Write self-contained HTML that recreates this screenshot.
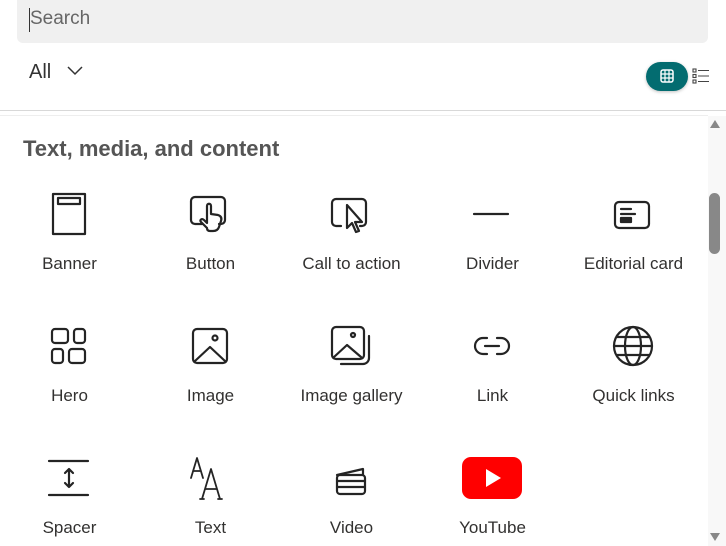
<!DOCTYPE html>
<html><head><meta charset="utf-8"><style>
body{margin:0;width:726px;height:546px;overflow:hidden;background:#fff;font-family:"Liberation Sans",sans-serif;position:relative}
.a{position:absolute}
.lbl{position:absolute;width:141px;text-align:center;font-size:17px;color:#323130}
svg.i{position:absolute;width:44px;height:44px;fill:none;stroke:#242424;stroke-width:2.2;stroke-linejoin:round;stroke-linecap:round}
</style></head><body>
<div class="a" style="left:17px;top:0;width:691px;height:43px;background:#f0f0f0;border-radius:0 0 6px 6px"></div>
<div class="a" style="left:29px;top:8px;width:1px;height:24px;background:#333"></div>
<div class="a" style="left:30px;top:8px;font-size:19px;color:#666">Search</div>
<div class="a" style="left:29px;top:61px;font-size:20px;color:#333">All</div>
<svg class="a" style="left:66px;top:65px" width="18" height="12"><path d="M2 2l7 7 7-7" stroke="#333" stroke-width="1.5" fill="none"/></svg>
<div class="a" style="left:646px;top:62px;width:42px;height:29px;background:#036c70;border-radius:15px;box-shadow:0 1px 3px rgba(0,0,0,.25)"></div>
<svg class="a" style="left:660px;top:69px" width="14" height="14"><rect x="1" y="1" width="12" height="12" rx="2" fill="none" stroke="#fff" stroke-width="1.5"/><path d="M5 1v12M9 1v12M1 5h12M1 9h12" stroke="#fff" stroke-width="1.2"/></svg>
<svg class="a" style="left:692px;top:68px" width="18" height="16"><g stroke="#444" stroke-width="1.1" fill="none"><rect x="1" y="1" width="3" height="3"/><rect x="1" y="6.5" width="3" height="3"/><rect x="1" y="12" width="3" height="3"/><path d="M6 2.5h11M6 8h11M6 13.5h11"/></g></svg>
<div class="a" style="left:0;top:110px;width:726px;height:1px;background:#d8d8d8"></div>
<div class="a" style="left:0;top:115px;width:708px;height:1px;background:#eee"></div>
<div class="a" style="left:708px;top:116px;width:18px;height:430px;background:#f8f8f8"></div>
<svg class="a" style="left:708px;top:117px" width="14" height="12"><path d="M2 11l5-8 5 8z" fill="#888"/></svg>
<svg class="a" style="left:708px;top:531px" width="14" height="12"><path d="M2 2l5 8 5-8z" fill="#888"/></svg>
<div class="a" style="left:709px;top:193px;width:11px;height:61px;background:#888;border-radius:6px"></div>
<div class="a" style="left:23px;top:136px;font-size:22px;font-weight:bold;color:#555">Text, media, and content</div>

<!-- row1 -->
<svg class="i" style="left:47px;top:192px" viewBox="0 0 44 44"><rect x="6" y="2" width="32" height="40"/><rect x="11" y="6" width="22" height="6"/></svg>
<svg class="i" style="left:188px;top:192px" viewBox="0 0 44 44"><path d="M14 32H7a4 4 0 0 1-4-4V9a4 4 0 0 1 4-4h26a4 4 0 0 1 4 4v19a4 4 0 0 1-4 4h-2"/><path d="M19 36l-6-6c-2-2 1-4 3-2l3 3V14c0-3 4-3 4 0v8l7 1c3 1 4 3 3 6l-2 6c-1 3-3 4-6 4h-3c-2 0-3-1-3-3"/></svg>
<svg class="i" style="left:329px;top:192px" viewBox="0 0 44 44"><path d="M12 34H7a4 4 0 0 1-4-4V11a4 4 0 0 1 4-4h26a4 4 0 0 1 4 4v19a4 4 0 0 1-4 4h-2"/><path d="M18 13v23l5-5 4 9 3-1-4-9h7z"/></svg>
<svg class="i" style="left:470px;top:192px" viewBox="0 0 44 44"><path d="M4 22h34"/></svg>
<svg class="i" style="left:611px;top:192px" viewBox="0 0 44 44"><rect x="4" y="10" width="34" height="26" rx="4"/><path d="M10 17h10M10 22h14"/><rect x="10" y="26" width="10" height="4" fill="#242424"/></svg>
<div class="lbl" style="left:-1px;top:254px">Banner</div>
<div class="lbl" style="left:140px;top:254px">Button</div>
<div class="lbl" style="left:281px;top:254px">Call to action</div>
<div class="lbl" style="left:422px;top:254px">Divider</div>
<div class="lbl" style="left:563px;top:254px">Editorial card</div>

<!-- row2 -->
<svg class="i" style="left:47px;top:324px" viewBox="0 0 44 44"><rect x="5" y="5" width="16" height="14" rx="3"/><rect x="27" y="5" width="11" height="14" rx="3"/><rect x="5" y="25" width="11" height="14" rx="3"/><rect x="22" y="25" width="16" height="14" rx="3"/></svg>
<svg class="i" style="left:188px;top:324px" viewBox="0 0 44 44"><rect x="5" y="5" width="34" height="34" rx="4"/><circle cx="27" cy="14" r="2.5"/><path d="M7 37l15-14 15 14"/></svg>
<svg class="i" style="left:329px;top:324px" viewBox="0 0 44 44"><rect x="3" y="3" width="32" height="32" rx="4"/><circle cx="24" cy="11" r="2"/><path d="M5 33l13-12 14 12M40 12v22a6 6 0 0 1-6 6H12"/></svg>
<svg class="i" style="left:470px;top:324px" viewBox="0 0 44 44"><path d="M17 14h-4a8 8 0 0 0 0 16h4M27 14h4a8 8 0 0 1 0 16h-4M15 22h14"/></svg>
<svg class="i" style="left:611px;top:324px" viewBox="0 0 44 44"><circle cx="22" cy="22" r="19"/><ellipse cx="22" cy="22" rx="8" ry="19"/><path d="M3 22h38M6 13h32M6 31h32"/></svg>
<div class="lbl" style="left:-1px;top:386px">Hero</div>
<div class="lbl" style="left:140px;top:386px">Image</div>
<div class="lbl" style="left:281px;top:386px">Image gallery</div>
<div class="lbl" style="left:422px;top:386px">Link</div>
<div class="lbl" style="left:563px;top:386px">Quick links</div>

<!-- row3 -->
<svg class="i" style="left:47px;top:456px" viewBox="0 0 44 44"><path d="M2 5h39M2 39h39M22 14v16M18 17l4-4 4 4M18 27l4 4 4-4"/></svg>
<svg class="i" style="left:188px;top:456px;stroke-width:1.8" viewBox="0 0 44 44"><path d="M3 22l6-20 6 20M5 15h8M14 43l9-30 9 30M17 33h12M12 43h4M30 43h4"/></svg>
<svg class="i" style="left:329px;top:456px" viewBox="0 0 44 44"><rect x="8" y="19" width="28" height="19" rx="3"/><path d="M8 25h28M8 31h28M8 19l26-6v5"/></svg>
<svg class="a" style="left:462px;top:457px" width="60" height="42"><rect x="0" y="0" width="60" height="42" rx="9" fill="#f00"/><path d="M24 12v18l15-9z" fill="#fff"/></svg>
<div class="lbl" style="left:-1px;top:518px">Spacer</div>
<div class="lbl" style="left:140px;top:518px">Text</div>
<div class="lbl" style="left:281px;top:518px">Video</div>
<div class="lbl" style="left:422px;top:518px">YouTube</div>
</body></html>
